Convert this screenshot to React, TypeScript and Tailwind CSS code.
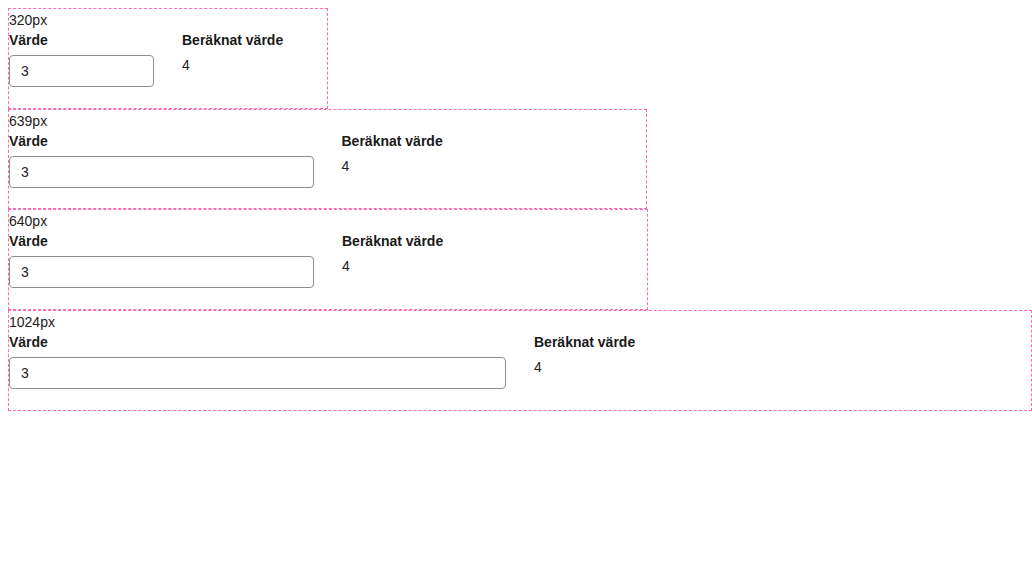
const SIZES = [320, 639, 640, 1024]

function Field({ width }: { width: number }) {
  return (
    <div className="box-border h-[100.67px] border border-dashed border-[#ff69b4]" style={{ width }}>
      <div className="pt-[3px] text-[14px] leading-[16px] text-[#222]">{width}px</div>
      <div className="mt-[4px] grid grid-cols-2 gap-x-[28px]">
        <div className="flex flex-col">
          <label className="text-[14px] font-bold leading-[16px] text-[#1a1a1a]">Värde</label>
          <input
            defaultValue="3"
            className="mt-[7px] box-border h-[32px] w-full rounded-[4px] border border-[#8f8f8f] bg-white pl-[11px] text-[14px] text-[#222] outline-none"
          />
        </div>
        <div className="flex flex-col">
          <div className="text-[14px] font-bold leading-[16px] text-[#1a1a1a]">Beräknat värde</div>
          <div className="mt-[9px] text-[14px] leading-[16px] text-[#222]">4</div>
        </div>
      </div>
    </div>
  )
}

export default function App() {
  return (
    <div className="min-h-screen bg-white pl-[8px] pt-[8px] font-['Liberation_Sans',Arial,sans-serif]">
      {SIZES.map(w => (
        <Field key={w} width={w} />
      ))}
    </div>
  )
}
